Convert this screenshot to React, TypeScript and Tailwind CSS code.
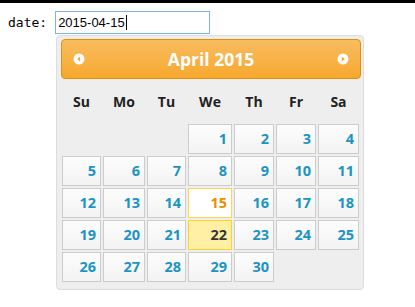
import React from 'react'

type Day = { n: number; kind?: 'active' | 'today' }

const colWidths = [39, 42, 39, 44, 40, 40, 41]
const dayNames = ['Su', 'Mo', 'Tu', 'We', 'Th', 'Fr', 'Sa']

// April 2015 starts on a Wednesday
const weeks: (Day | null)[][] = [
    [null, null, null, { n: 1 }, { n: 2 }, { n: 3 }, { n: 4 }],
    [{ n: 5 }, { n: 6 }, { n: 7 }, { n: 8 }, { n: 9 }, { n: 10 }, { n: 11 }],
    [{ n: 12 }, { n: 13 }, { n: 14 }, { n: 15, kind: 'active' }, { n: 16 }, { n: 17 }, { n: 18 }],
    [{ n: 19 }, { n: 20 }, { n: 21 }, { n: 22, kind: 'today' }, { n: 23 }, { n: 24 }, { n: 25 }],
    [{ n: 26 }, { n: 27 }, { n: 28 }, { n: 29 }, { n: 30 }, null, null],
]

function Arrow({ dir }: { dir: 'prev' | 'next' }) {
    return (
        <svg width="12" height="12" viewBox="0 0 12 12">
            <circle cx="6" cy="6" r="5.5" fill="#ffffff" />
            {dir === 'prev' ? (
                <path d="M7.2 3.4 L4.2 6 L7.2 8.6 Z" fill="#f6a828" />
            ) : (
                <path d="M4.8 3.4 L7.8 6 L4.8 8.6 Z" fill="#f6a828" />
            )}
        </svg>
    )
}

function DayCell({ day }: { day: Day }) {
    let cls = 'border-[#cccccc] bg-gradient-to-b from-[#fdfdfd] to-[#f3f3f3] text-[#1c94c4]'
    if (day.kind === 'active') cls = 'border-[#fbd850] bg-white text-[#eb8f00]'
    if (day.kind === 'today') cls = 'border-[#fed22f] bg-[#fff0a5] text-[#363636]'
    return (
        <div className={`h-[30px] border flex items-center justify-end pr-[4px] text-[14.5px] font-bold ${cls}`}>
            {day.n}
        </div>
    )
}

export default function App() {
    return (
        <div className="w-[415px] h-[307px] bg-white relative overflow-hidden">
            <div className="h-[3px] bg-black" />

            {/* Field */}
            <div className="flex items-center pl-[8px] pt-[8px]">
                <span className="text-[13px] text-black mr-[8px]" style={{ fontFamily: '"DejaVu Sans Mono", monospace' }}>
                    date:
                </span>
                <div
                    className="w-[155px] h-[23px] border border-[#7eb4ea] flex items-center pl-[2px] text-[13px] text-black"
                    style={{ fontFamily: '"Liberation Sans", Arial, sans-serif' }}
                >
                    2015-04-15
                    <span className="w-px h-[15px] bg-black ml-px" />
                </div>
            </div>

            {/* Datepicker popup */}
            <div
                className="absolute left-[56px] top-[35px] w-[308px] h-[255px] border border-[#dddddd] bg-[#eeeeee] rounded-[4px] pt-[3px] pl-[4px]"
                style={{ fontFamily: '"Open Sans", "Liberation Sans", sans-serif' }}
            >
                <div className="w-[300px] h-[40px] border border-[#e78f08] rounded-[4px] bg-gradient-to-b from-[#f9bc5e] to-[#f6a82b] flex items-center justify-between px-[11px]">
                    <Arrow dir="prev" />
                    <span className="text-white text-[17.5px] font-bold">April 2015</span>
                    <Arrow dir="next" />
                </div>

                <div className="ml-px">
                    <div className="flex gap-[2px] h-[45px] items-center">
                        {dayNames.map((d, i) => (
                            <div
                                key={d}
                                className="text-center text-[14px] font-bold text-[#222222]"
                                style={{ width: colWidths[i] }}
                            >
                                {d}
                            </div>
                        ))}
                    </div>

                    <div className="flex flex-col gap-[2px]">
                        {weeks.map((week, wi) => (
                            <div key={wi} className="flex gap-[2px]">
                                {week.map((day, di) => (
                                    <div key={di} style={{ width: colWidths[di] }}>
                                        {day ? <DayCell day={day} /> : <div className="h-[30px]" />}
                                    </div>
                                ))}
                            </div>
                        ))}
                    </div>
                </div>
            </div>
        </div>
    )
}
